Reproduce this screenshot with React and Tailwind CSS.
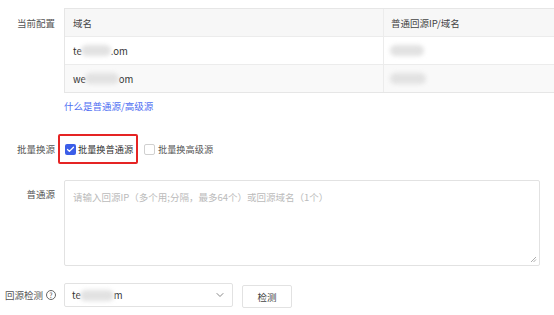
import { ChevronDown, Check } from 'lucide-react';

const font = { fontFamily: '"Microsoft YaHei", "Noto Sans CJK SC", "Noto Sans", sans-serif' };

function Blur({ w = 30, className = '' }) {
  return <span className={`inline-block h-[11px] rounded-full bg-[#e2e2e2] blur-[2px] align-middle ${className}`} style={{ width: w }} />;
}

export default function App() {
  return (
    <div className="w-[554px] h-[315px] bg-white overflow-hidden text-[9.5px] leading-[14px] text-[#333] whitespace-nowrap" style={font}>
      {/* 当前配置 */}
      <div className="flex pt-[8px]">
        <div className="w-[64px] pr-[9px] pt-[8px] text-right text-[#555]">当前配置</div>
        <div className="flex-1 border-t border-l border-b border-[#e6e6e6]">
          <div className="flex h-[28px] items-center bg-[#f7f7f7] border-b border-[#ececec] text-[#444]">
            <div className="w-[318px] pl-[8px]">域名</div>
            <div className="flex-1 h-full flex items-center pl-[7px] border-l border-[#ececec]">普通回源IP/域名</div>
          </div>
          <div className="flex h-[28px] items-center border-b border-[#ececec]">
            <div className="w-[318px] pl-[8px] flex items-center">te<Blur w={30} className="-ml-[1px]" />.om</div>
            <div className="flex-1 h-full flex items-center pl-[6px] border-l border-[#ececec]"><Blur w={34} /></div>
          </div>
          <div className="flex h-[27px] items-center bg-[#f9f9f9]">
            <div className="w-[318px] pl-[8px] flex items-center">we<Blur w={34} className="-ml-[1px]" />om</div>
            <div className="flex-1 h-full flex items-center pl-[6px] border-l border-[#ececec]"><Blur w={36} /></div>
          </div>
        </div>
      </div>
      <div className="pl-[64px] mt-[6px] text-[#4e6ef2]">什么是普通源/高级源</div>

      {/* 批量换源 */}
      <div className="flex items-center mt-[21px]">
        <div className="w-[64px] pr-[9px] text-right text-[#555]">批量换源</div>
        <div className="-ml-[6px] h-[30px] w-[80px] border-2 border-[#e52424] rounded-[2px] flex items-center pl-[5px]">
          <span className="w-[11px] h-[11px] rounded-[2px] bg-[#3c5ee8] flex items-center justify-center">
            <Check size={9} strokeWidth={3.5} color="white" />
          </span>
          <span className="ml-[2px] text-[9.2px]">批量换普通源</span>
        </div>
        <span className="ml-[6px] w-[11px] h-[11px] rounded-[2px] border border-[#d0d0d0] bg-white" />
        <span className="ml-[3px] text-[#555] text-[9.2px]">批量换高级源</span>
      </div>

      {/* 普通源 */}
      <div className="flex mt-[16px]">
        <div className="w-[64px] pr-[9px] pt-[7px] text-right text-[#555]">普通源</div>
        <div className="relative w-[476px] h-[86px] border border-[#e2e2e2] rounded-[2px] pl-[8px] pt-[9px] text-[#bbb]">
          请输入回源IP（多个用;分隔，最多64个）或回源域名（1个）
          <svg className="absolute right-[2px] bottom-[2px]" width="7" height="7" viewBox="0 0 7 7">
            <path d="M6 1 L1 6 M6 3.5 L3.5 6" stroke="#999" strokeWidth="0.8" />
          </svg>
        </div>
      </div>

      {/* 回源检测 */}
      <div className="flex items-center mt-[16px]">
        <div className="w-[64px] pr-[8px] flex items-center justify-end gap-[3px] text-[#555]">
          回源检测
          <span className="w-[10px] h-[10px] rounded-full border border-[#666] text-[7px] leading-none flex items-center justify-center">?</span>
        </div>
        <div className="w-[169px] h-[24px] border border-[#e2e2e2] rounded-[2px] flex items-center pl-[7px] pr-[6px]">
          <span className="flex items-center">te<Blur w={34} className="-ml-[1px]" />m</span>
          <ChevronDown size={12} className="ml-auto text-[#888]" />
        </div>
        <div className="ml-[9px] mt-[3px] w-[50px] h-[23px] border border-[#e2e2e2] rounded-[2px] flex items-center justify-center text-[#444]">检测</div>
      </div>
    </div>
  );
}
